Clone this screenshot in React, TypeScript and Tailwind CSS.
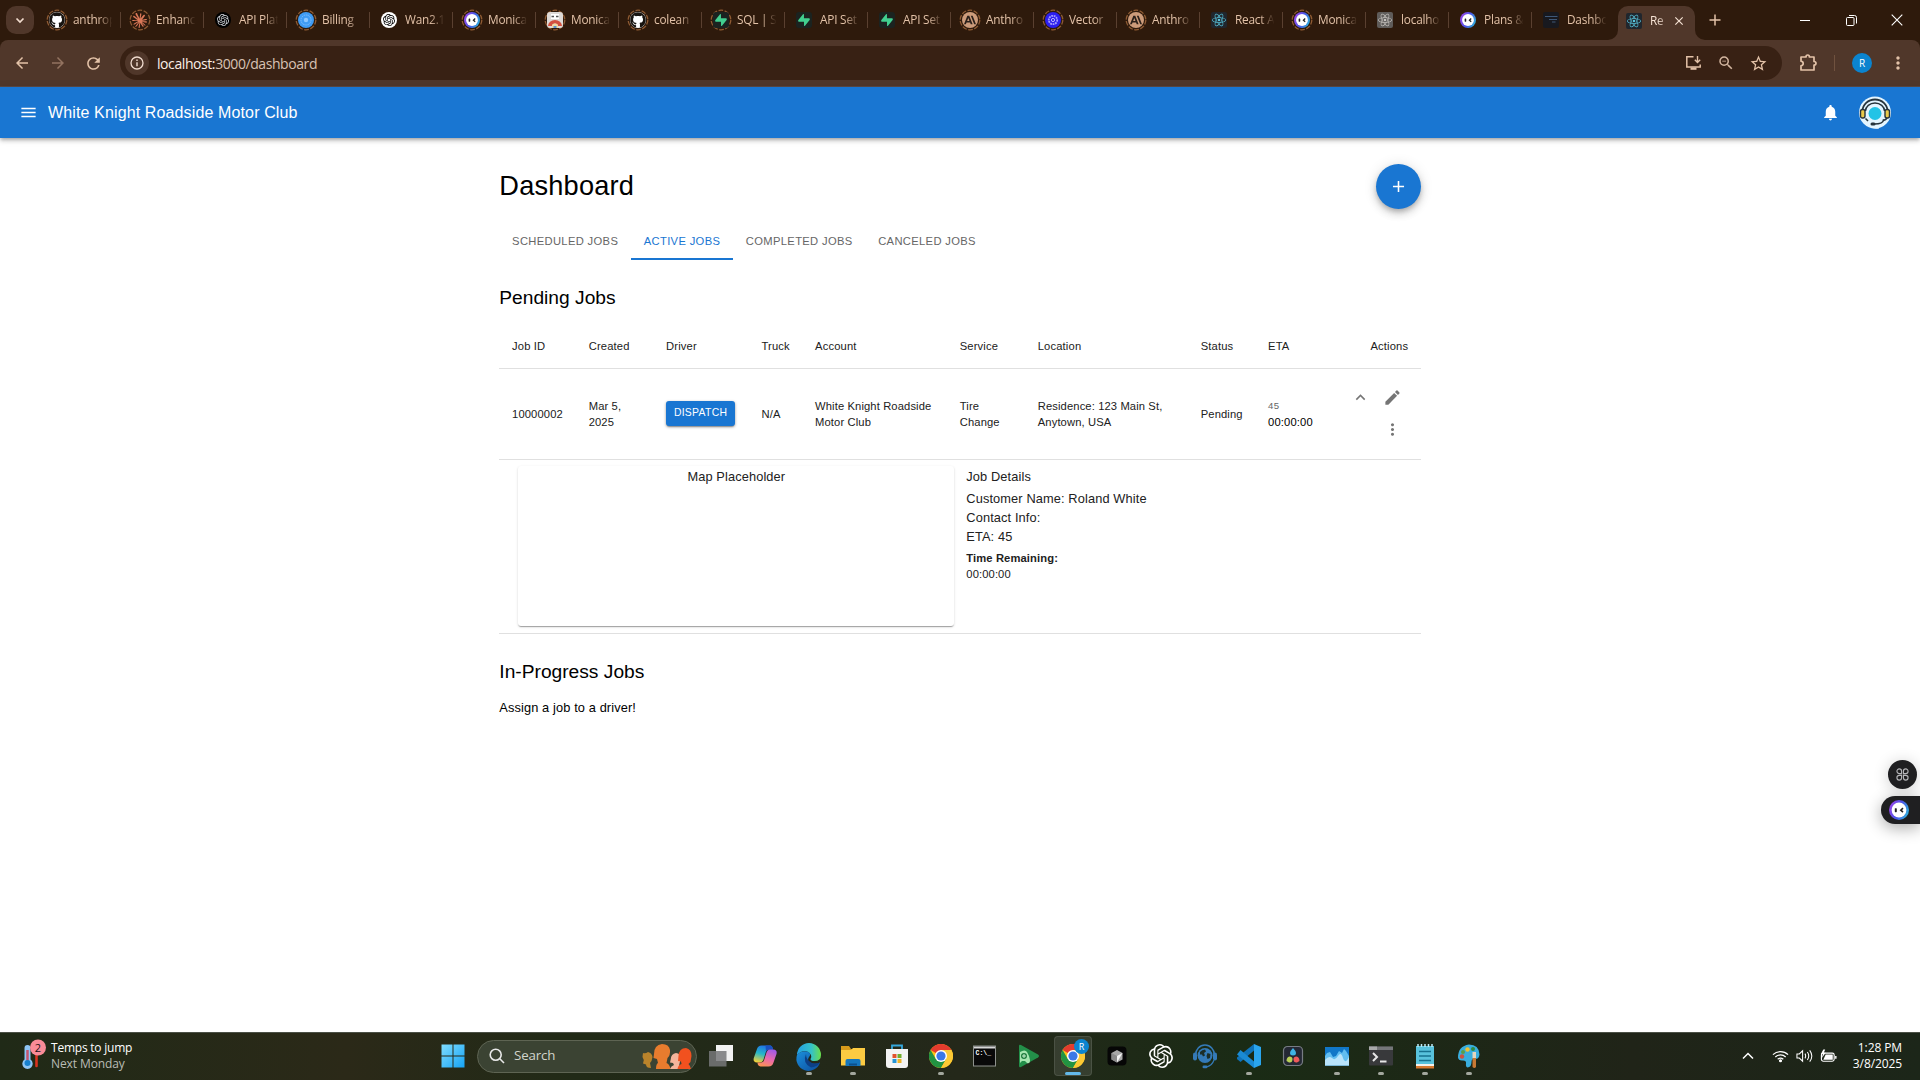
import React from "react";
import { MdMenu, MdNotifications, MdEdit, MdMoreVert, MdExpandLess, MdAdd, MdArrowBack, MdArrowForward, MdRefresh, MdStarOutline, MdZoomOut, MdClose } from "react-icons/md";
import { FaGithub } from "react-icons/fa";
import { SiOpenai, SiSupabase, SiAnthropic, SiClaude, SiReact } from "react-icons/si";

/* ---------- shared icons ---------- */

type P = { id?: string };

const Monica = ({ id = "m" }: P) => (
  <svg viewBox="0 0 20 20" className="size-full">
    <defs>
      <linearGradient id={id} x1="0" y1="0.3" x2="1" y2="0.7">
        <stop offset="0" stopColor="#9a45e8" />
        <stop offset="0.5" stopColor="#4a55e8" />
        <stop offset="1" stopColor="#2fb4dc" />
      </linearGradient>
    </defs>
    <circle cx="10" cy="10" r="10" fill={`url(#${id})`} />
    <circle cx="10" cy="10" r="7.4" fill="#fff" />
    <rect x="5.8" y="8.2" width="2" height="4" rx="0.6" fill="#222" />
    <path d="M14 8.2 11.8 10.2 14 12.2" fill="none" stroke="#222" strokeWidth="1.6" />
  </svg>
);

const Chrome = () => (
  <svg viewBox="0 0 24 24" className="size-full">
    <circle cx="12" cy="12" r="12" fill="#fbc116" />
    <path d="M12 12 1.6 6A12 12 0 0 1 22.4 6H12Z" fill="#e33b2e" />
    <path d="M1.6 6A12 12 0 0 0 12 24l5.2-9L12 12 6.8 15Z" fill="#229342" />
    <path d="M22.4 6H12v6l5.2 3L12 24A12 12 0 0 0 22.4 6Z" fill="#fcc934" />
    <circle cx="12" cy="12" r="6" fill="#fff" />
    <circle cx="12" cy="12" r="4.6" fill="#3b78e7" />
  </svg>
);

type Kind = "github" | "claude" | "openai" | "billing" | "wan" | "monica" | "doge" | "supabase" | "anthropic" | "vector" | "react" | "local" | "dash";

const Favicon = ({ kind, id }: { kind: Kind; id: string }) => {
  switch (kind) {
    case "github":
      return <span className="flex size-4 items-center justify-center rounded-full bg-white"><FaGithub size={16} color="#181410" /></span>;
    case "claude":
      return <SiClaude size={15} color="#d97757" />;
    case "openai":
      return <span className="flex size-4 items-center justify-center rounded-full bg-black text-gray-300"><SiOpenai size={12} /></span>;
    case "wan":
      return <span className="flex size-4 items-center justify-center rounded-full bg-white text-black"><SiOpenai size={12} /></span>;
    case "billing":
      return (
        <svg viewBox="0 0 16 16" className="size-4">
          <circle cx="8" cy="8" r="8" fill="#3f9bf3" />
          <circle cx="8" cy="8" r="5" fill="none" stroke="#7fbdfb" strokeWidth="1" strokeDasharray="1.5 0.8" />
          <circle cx="8" cy="8" r="2.2" fill="#8cc6ff" />
        </svg>
      );
    case "monica":
      return <span className="size-4"><Monica id={id} /></span>;
    case "doge":
      return (
        <svg viewBox="0 0 16 16" className="size-4">
          <rect width="16" height="16" rx="3" fill="#ddd9d6" />
          <path d="M4 2h8v5H4Z" fill="#fff" />
          <path d="M4.500 4.500h2.500M9 4.500h2.500" stroke="#555" strokeWidth="1.400" />
          <path d="M1 14a7 6 0 0 1 14 0h-4a3 2.500 0 0 0-6 0Z" fill="#d4503f" />
          <path d="M5 14a3 2.500 0 0 1 6 0v2H5Z" fill="#f0d9a0" />
          <path d="M6.500 14h3v2h-3Z" fill="#5b8fd0" />
        </svg>
      );
    case "supabase":
      return <span className="flex size-4 items-center justify-center rounded-[3px] bg-[#1b2320]"><SiSupabase size={12} color="#42cf8f" /></span>;
    case "anthropic":
      return <span className="flex size-4 items-center justify-center rounded-full bg-[#cc9b7a] text-[#2b201a]"><SiAnthropic size={12} /></span>;
    case "vector":
      return (
        <svg viewBox="0 0 16 16" className="size-4">
          <circle cx="8" cy="8" r="8" fill="#2c1ff0" />
          <circle cx="8" cy="8" r="4.200" fill="none" stroke="#a39cff" strokeWidth="1.800" strokeDasharray="1.800 0.700" />
          <circle cx="8" cy="8" r="1.600" fill="none" stroke="#b9b4ff" />
        </svg>
      );
    case "react":
      return <span className="flex size-4 items-center justify-center rounded-[2px] bg-[#20262d]"><SiReact size={14} color="#58c4dc" /></span>;
    case "local":
      return <span className="flex size-4 items-center justify-center rounded-[2px] bg-[#5f5c5a]"><SiReact size={14} color="#c6c2be" /></span>;
    case "dash":
      return (
        <svg viewBox="0 0 16 16" className="size-4">
          <rect width="16" height="16" rx="2" fill="#18191f" />
          <path d="M2 4.500h12.500M6 7.500h8M9 10h3.500" stroke="#3f5878" strokeWidth="1.200" />
        </svg>
      );
  }
};

/* ---------- browser chrome ---------- */

const TABS: { kind: Kind; title: string; ring?: boolean }[] = [
  { kind: "github", title: "anthrop", ring: true },
  { kind: "claude", title: "Enhanc", ring: true },
  { kind: "openai", title: "API Plat" },
  { kind: "billing", title: "Billing", ring: true },
  { kind: "wan", title: "Wan2.1" },
  { kind: "monica", title: "Monica", ring: true },
  { kind: "doge", title: "Monica", ring: true },
  { kind: "github", title: "colean", ring: true },
  { kind: "supabase", title: "SQL | S", ring: true },
  { kind: "supabase", title: "API Set" },
  { kind: "supabase", title: "API Set" },
  { kind: "anthropic", title: "Anthro", ring: true },
  { kind: "vector", title: "Vector", ring: true },
  { kind: "anthropic", title: "Anthro", ring: true },
  { kind: "react", title: "React A" },
  { kind: "monica", title: "Monica", ring: true },
  { kind: "local", title: "localho" },
  { kind: "monica", title: "Plans &" },
  { kind: "dash", title: "Dashbo" },
];

const TabStrip = () => (
  <div className="flex h-10 items-center bg-[#2e1a0c] text-[12px] text-[#e3c2a8]">
    <button className="ml-[6px] flex h-7 w-7 items-center justify-center rounded-[10px] bg-[#50372a]">
      <svg viewBox="0 0 10 10" className="size-[10px]"><path d="M1.500 3.500 5 7l3.500-3.500" fill="none" stroke="#f2ddcf" strokeWidth="1.700" /></svg>
    </button>
    <div className="ml-1 flex">
      {TABS.map((t, i) => (
        <div key={i} className="flex h-10 w-[83px] items-center">
          <div className="ml-[6.500px] grid size-6 shrink-0 place-items-center">
            {t.ring && (
              <svg viewBox="0 0 24 24" className="col-start-1 row-start-1 size-6">
                <circle cx="12" cy="12" r="9.800" fill="none" stroke="#8f5b33" strokeWidth="1.300" strokeDasharray="4.700 1.500" />
              </svg>
            )}
            <span className="col-start-1 row-start-1 flex"><Favicon kind={t.kind} id={`tab${i}`} /></span>
          </div>
          <span className="ml-[4.500px] w-[43px] shrink-0 whitespace-nowrap text-[11.800px] tracking-[-0.200px] [mask-image:linear-gradient(to_right,black_58%,transparent_92%)]">{t.title}</span>
          {i < 18 && <span className="ml-auto h-4 w-px shrink-0 bg-[#5a4030]" />}
        </div>
      ))}
    </div>
    <svg viewBox="0 0 10 34" className="-ml-[7px] h-[34px] w-[10px] self-end"><path d="M10 24v10H0A10 10 0 0 0 10 24Z" fill="#50372a" /></svg>
    <div className="flex h-[34px] w-[77px] items-center self-end rounded-t-[10px] bg-[#50372a] pb-1 text-[#f6e3d5]">
      <span className="ml-2"><Favicon kind="react" id="active" /></span>
      <span className="ml-2 w-[14px] whitespace-nowrap text-[11.800px] tracking-[-0.200px] [mask-image:linear-gradient(to_right,black_50%,#0008)]">Re</span>
      <MdClose size={14} className="ml-2" />
    </div>
    <svg viewBox="0 0 10 34" className="h-[34px] w-[10px] self-end"><path d="M0 24v10h10A10 10 0 0 1 0 24Z" fill="#50372a" /></svg>
    <svg viewBox="0 0 12 12" className="ml-[4px] size-3"><path d="M6 .5v11M.5 6h11" stroke="#e3c2a8" strokeWidth="1.500" /></svg>
    <div className="ml-auto mr-[17px] flex items-center text-white">
      <svg viewBox="0 0 10 10" className="mr-9 size-[10px]"><path d="M0 5.500h10" stroke="#fff" /></svg>
      <svg viewBox="0 0 11 11" className="mr-[34px] size-[11px]"><path d="M.5 3.500a1 1 0 0 1 1-1h5.500a1 1 0 0 1 1 1v6a1 1 0 0 1-1 1h-5.500a1 1 0 0 1-1-1ZM3 .5h5.500a2 2 0 0 1 2 2v6" fill="none" stroke="#fff" /></svg>
      <svg viewBox="0 0 12 12" className="size-3"><path d="m.7.7 10.600 10.600M11.300.7.7 11.300" stroke="#fff" strokeWidth="1.100" /></svg>
    </div>
  </div>
);

const Toolbar = () => (
  <div className="bg-[#2e1a0c]">
    <div className="flex h-[47px] items-center rounded-t-[8px] border-b border-[#5c4a45] bg-[#50372a] text-[#e3c2a8]">
      <MdArrowBack size={18} className="ml-[13px]" />
      <MdArrowForward size={18} className="ml-[18px] text-[#937360]" />
      <MdRefresh size={19} className="ml-[17px]" />
      <div className="ml-[17px] flex h-[34px] w-[1662px] items-center rounded-full bg-[#382114]">
        <span className="ml-[5px] flex size-6 items-center justify-center rounded-full bg-[#50372a]">
          <svg viewBox="0 0 14 14" className="size-[14px]"><circle cx="7" cy="7" r="6" fill="none" stroke="#f0dccf" strokeWidth="1.300" /><path d="M7 6.300v4M7 3.600v1.400" stroke="#f0dccf" strokeWidth="1.400" /></svg>
        </span>
        <span className="ml-2 text-[14px] tracking-[-0.420px] text-[#d8c2b3]"><span className="text-[#fbeee5]">localhost:</span>3000/dashboard</span>
        <div className="ml-auto mr-[14px] flex items-center text-[#e3c2a8]">
          <svg viewBox="0 0 17 16" className="mr-[15px] h-4 w-[17px]"><path d="M8.500 1.800H1.800V12h13.400V9.500" fill="none" stroke="currentColor" strokeWidth="1.500" /><path d="M5.500 12.500h6v2.300h-6Z" fill="currentColor" /><path d="M12.500 1v6M9.800 4.800l2.700 2.700 2.700-2.700" fill="none" stroke="currentColor" strokeWidth="1.400" /></svg>
          <MdZoomOut size={18} className="mr-[14px] text-[#d3b6a0]" />
          <MdStarOutline size={19} />
        </div>
      </div>
      <svg viewBox="0 0 18 18" className="ml-[17px] size-[18px] overflow-visible"><path d="M2 3h5q0-2 1.700-2T10.400 3H15v4.500q2 0 2 1.700T15 11v5H2v-4.200q2.200-.4 2.200-2.300T2 7.200Z" fill="none" stroke="currentColor" strokeWidth="1.700" strokeLinejoin="round" /></svg>
      <span className="ml-[17px] h-4 w-px bg-[#70523f]" />
      <span className="ml-[17px] flex size-5 items-center justify-center rounded-full bg-[#0b84cf] text-[10px] text-white">R</span>
      <MdMoreVert size={20} className="ml-[16px]" />
    </div>
  </div>
);

/* ---------- application ---------- */

const Headset = () => (
  <svg viewBox="0 0 32 32" className="size-8 overflow-visible">
    <circle cx="16" cy="15.500" r="16" fill="#e4f5ff" />
    <path d="M8 26h12v5.500q-5 1-9-1.500Z" fill="#e4f5ff" />
    <path d="M3.500 14a12.500 11.500 0 0 1 25 0" fill="none" stroke="#27343c" strokeWidth="1.800" />
    <path d="M6.500 14a9.500 8 0 0 1 19 0" fill="none" stroke="#27343c" strokeWidth="1.400" />
    <circle cx="16" cy="16.500" r="6.500" fill="#22c3e6" />
    <rect x="1.500" y="12.500" width="4.500" height="8.500" rx="2" fill="#e9c94a" stroke="#27343c" strokeWidth="1.400" />
    <rect x="26" y="12.500" width="4.500" height="8.500" rx="2" fill="#e9c94a" stroke="#27343c" strokeWidth="1.400" />
    <path d="M6.500 21.500 9 24M28 21q-1.500 2.500-3.500 2-.5 4-9 4" fill="none" stroke="#27343c" strokeWidth="1.600" />
    <rect x="11.500" y="25.500" width="5" height="3" rx="1.500" fill="#27343c" />
  </svg>
);

const COLS = "grid grid-cols-[76.600px_77.400px_95.400px_53.600px_144.700px_78px_163px_67.300px_70px_95.800px]";
const HEAD = ["Job ID", "Created", "Driver", "Truck", "Account", "Service", "Location", "Status", "ETA"];

const App = () => (
  <div className="flex h-[1080px] w-[1920px] flex-col overflow-hidden bg-white font-['Open_Sans','Noto_Sans',sans-serif]">
    <TabStrip />
    <Toolbar />
    <header className="z-10 flex h-[51px] shrink-0 items-center bg-[#1976d2] font-['Liberation_Sans',Arial,sans-serif] text-white shadow-[0_2px_3px_-1px_#0003,0_3px_4px_#00000024,0_1px_8px_#0000001f]">
      <MdMenu size={19} className="ml-[19px]" />
      <h1 className="ml-[10px] text-[16px] tracking-[0.130px]">White Knight Roadside Motor Club</h1>
      <MdNotifications size={19} className="ml-auto" />
      <span className="ml-[19px] mr-[29px]"><Headset /></span>
    </header>

    <div className="flex min-h-0 flex-1 font-['Liberation_Sans',Arial,sans-serif]">
      <main className="ml-[499.300px] w-[921.800px] text-[11.200px] text-[#212121]">
        <div className="mt-[26px] flex h-[45px] items-center justify-between">
          <h2 className="pb-[2px] text-[27.200px] leading-[34px] tracking-[0.200px] text-black">Dashboard</h2>
          <button className="flex size-[45px] items-center justify-center rounded-full bg-[#1976d2] text-white shadow-[0_3px_5px_-1px_#0003,0_5px_8px_#00000024,0_1px_14px_#0000001f]">
            <MdAdd size={19} />
          </button>
        </div>
        <nav className="mt-[13px] flex h-[38px] text-[11.200px] tracking-[0.340px] text-[#666]">
          <span className="flex items-center px-[12.800px]">SCHEDULED JOBS</span>
          <span className="flex items-center border-b-2 border-[#1976d2] px-[12.800px] pt-[2px] text-[#1976d2]">ACTIVE JOBS</span>
          <span className="flex items-center px-[12.800px]">COMPLETED JOBS</span>
          <span className="flex items-center px-[12.800px]">CANCELED JOBS</span>
        </nav>
        <h3 className="mt-[25px] text-[19.200px] leading-[26px] text-black">Pending Jobs</h3>
        <div className={`${COLS} mt-[11px] h-[47px] items-center border-b border-[#e0e0e0] pt-[2px] tracking-[0.150px]`}>
          {HEAD.map((h) => <span key={h} className="px-[12.800px]">{h}</span>)}
          <span className="px-[12.800px] text-right">Actions</span>
        </div>
        <div className={`${COLS} h-[91px] items-center border-b border-[#e0e0e0] pb-[1px] leading-[16px] tracking-[0.120px]`}>
          <span className="px-[12.800px]">10000002</span>
          <span className="px-[12.800px]">Mar 5,<br />2025</span>
          <span className="px-[12.800px]">
            <button className="flex h-[25px] w-[69px] items-center justify-center rounded-[3px] bg-[#1976d2] pb-[1px] text-[10.400px] tracking-[0.300px] text-white shadow-[0_2px_1px_-1px_#0003,0_1px_3px_#0006]">DISPATCH</button>
          </span>
          <span className="px-[12.800px]">N/A</span>
          <span className="whitespace-nowrap px-[12.800px]">White Knight Roadside<br />Motor Club</span>
          <span className="px-[12.800px]">Tire<br />Change</span>
          <span className="whitespace-nowrap px-[12.800px]">Residence: 123 Main St,<br />Anytown, USA</span>
          <span className="px-[12.800px]">Pending</span>
          <span className="px-[12.800px]"><span className="text-[9.600px] tracking-[0.320px] text-[#666]">45</span><br /><span className="tracking-[0.160px] text-black">00:00:00</span></span>
          <span className="grid grid-cols-2 justify-items-center pl-[20px] pr-[13px] text-[#757575]">
            <span className="flex size-8 items-center justify-center"><MdExpandLess size={19} /></span>
            <span className="flex size-8 items-center justify-center"><MdEdit size={19} /></span>
            <span className="col-start-2 flex size-8 items-center justify-center"><MdMoreVert size={19} /></span>
          </span>
        </div>
        <div className="flex h-[174px] border-b border-[#e0e0e0] pl-[19px] pt-[6px] text-[12.800px] leading-[19px] tracking-[0.120px]">
          <div className="h-[160px] w-[436px] rounded-[3px] bg-white pt-[1px] text-center shadow-[0_2px_1px_-1px_#0003,0_1px_1px_#00000024,0_1px_3px_#0000001f]">Map Placeholder</div>
          <div className="ml-[12px] pt-[1px]">
            <p>Job Details</p>
            <p className="mt-[3px]">Customer Name: Roland White</p>
            <p>Contact Info:</p>
            <p>ETA: 45</p>
            <p className="mt-[4px] text-[11.200px] font-bold leading-4">Time Remaining:</p>
            <p className="text-[11.200px] leading-4">00:00:00</p>
          </div>
        </div>
        <h3 className="mt-[25px] text-[19.200px] leading-[26px] text-black">In-Progress Jobs</h3>
        <p className="mt-[13px] text-[12.800px] leading-[19px] tracking-[0.120px] text-black">Assign a job to a driver!</p>
      </main>
      <aside className="ml-auto flex flex-col items-end pt-[622px]">
        <span className="mr-[3px] flex size-[29px] items-center justify-center rounded-full bg-[#1f1f21] shadow-[0_2px_16px_#0003]">
          <svg viewBox="0 0 14 14" className="size-[13px]" fill="none" stroke="#b5b5b8" strokeWidth="1.200">
            <path d="M6 6H3.500A2.500 2.500 0 1 1 6 3.500ZM8 6h2.500A2.500 2.500 0 1 0 8 3.500ZM6 8H3.500A2.500 2.500 0 1 0 6 10.500ZM8 8h2.500A2.500 2.500 0 1 1 8 10.500Z" />
          </svg>
        </span>
        <span className="mt-[7px] flex h-7 w-[39px] items-center rounded-l-full bg-[#1f1f21] pl-[8px] shadow-[0_4px_16px_#0005]">
          <span className="size-5"><Monica id="side" /></span>
        </span>
      </aside>
    </div>
    <Taskbar />
  </div>
);

/* ---------- taskbar ---------- */

const TaskItem = ({ children, dot, active }: { children: React.ReactNode; dot?: boolean; active?: boolean }) => (
  <span className="grid h-[47px] w-[44px] place-items-center">
    <span className={`col-start-1 row-start-1 mb-[1px] grid h-10 w-[38px] place-items-center rounded-[4px] ${active ? "border border-white/10 bg-white/10" : ""}`}>
      <span className="flex size-6 items-center justify-center">{children}</span>
    </span>
    {dot && <span className="col-start-1 row-start-1 mb-[5px] h-[3px] w-[6px] self-end rounded-full bg-[#a3a79e]" />}
    {active && <span className="col-start-1 row-start-1 mb-[5px] h-[3px] w-4 self-end rounded-full bg-[#63b9e9]" />}
  </span>
);

const S = ({ children }: { children: React.ReactNode }) => <svg viewBox="0 0 24 24" className="size-6 overflow-visible">{children}</svg>;

const Taskbar = () => (
  <footer className="flex h-12 shrink-0 items-center border-t border-[#4b5046] bg-[linear-gradient(90deg,#202a17,#2b2918_18%,#212a17_30%,#24281a_50%,#1a2b15_65%,#202418_85%,#1c2619)] text-[12px] text-white">
    <div className="flex h-full w-[200px] items-center pl-[20px]">
      <svg viewBox="0 0 28 34" className="-mt-[3px] h-[34px] w-7">
        <path d="M16.500 17v11" stroke="#d8331f" strokeWidth="2.600" strokeLinecap="round" />
        <path d="M4.500 10a3 3 0 0 1 6 0v11.500a5.200 5.200 0 1 1-6 0Z" fill="#8ec5f5" />
        <path d="M7.500 12v13" stroke="#c5536e" strokeWidth="2.500" />
        <circle cx="7.500" cy="25" r="3" fill="#1680ce" />
        <circle cx="18" cy="9.500" r="8" fill="#f98b97" />
        <text x="18" y="13.500" textAnchor="middle" fontSize="11" fill="#251014">2</text>
      </svg>
      <div className="-mt-[2px] ml-[3px] leading-4 tracking-[-0.220px]"><p>Temps to jump</p><p className="tracking-[-0.100px] text-[#b9bcb5]">Next Monday</p></div>
    </div>
    <div className="ml-[230.500px] flex items-center">
      <TaskItem>
        <S>
          <defs><linearGradient id="win" x1="0" y1="0" x2="1" y2="1" gradientUnits="objectBoundingBox"><stop stopColor="#7fdcff" /><stop offset="1" stopColor="#15a3f5" /></linearGradient></defs>
          <path d="M.5.5h11v11H.5ZM12.500.5h11v11h-11ZM.5 12.500h11v11H.5ZM12.500 12.500h11v11h-11Z" fill="url(#win)" />
        </S>
      </TaskItem>
      <div className="mb-[1px] ml-[2.500px] mr-[2px] flex h-[33px] w-[220px] items-center rounded-full border border-[#5e6453] bg-[#3b4333]">
        <svg viewBox="0 0 16 16" className="ml-[11px] size-4" fill="none" stroke="#e8e8e8" strokeWidth="1.600"><circle cx="6.700" cy="6.700" r="5.500" /><path d="m10.800 10.800 4.200 4.200" /></svg>
        <span className="ml-[9px] text-[13.300px] tracking-[-0.150px] text-[#d1d4cc]">Search</span>
        <svg viewBox="0 0 50 26" className="ml-auto mr-[4px] h-[26px] w-[50px]">
          <path d="M1 10q2.500.8 5-1 4 1 4.500 5-.5 4-2.500 6l1 5q-5 0-5-3.500l-3-1 .8-3.500L.5 14Z" fill="#b9832b" />
          <path d="M20 1q7 0 8 6 .5 5-2.500 8l-1 5q3 1 4 6H14q0-5 2-6l-1-4-3.500-1L12 11q0-9 8-10Z" fill="#e87c2e" />
          <path d="M34 10q4.500 0 4.500 6l-1.500 7 1.500 3H28q1-3 4-4l-1-2-3-.5.8-3.500q.2-5 5.200-6Z" fill="#f4b49b" />
          <path d="M44 5q5.500 1 5.500 8l-1 6-2 2q2 2 2.500 5H35.500q.5-4 4-5l-.5-2.500-3-.5.5-5q.5-8 7.500-8Z" fill="#f1511f" />
        </svg>
      </div>
      <TaskItem><S><rect x="7" y="1" width="17" height="16" fill="#f2f2f2" /><rect x="0" y="7" width="17.500" height="15.500" fill="#77787a" fillOpacity="0.850" /></S></TaskItem>
      <TaskItem>
        <S>
          <defs>
            <linearGradient id="cpl" x1="0.6" y1="0" x2="0.3" y2="1"><stop stopColor="#1f6fe6" /><stop offset="0.500" stopColor="#25b7c9" /><stop offset="1" stopColor="#f2d13a" /></linearGradient>
            <linearGradient id="cpr" x1="0.7" y1="0" x2="0.3" y2="1"><stop stopColor="#a259e6" /><stop offset="0.550" stopColor="#ee6aa8" /><stop offset="1" stopColor="#fb9254" /></linearGradient>
          </defs>
          <path d="M8.500 1.500h9q2 .5 2.500 4h-4q-2.500 0-3.300 3l-2.200 7q-1 3-4 3H3.800q-4-.5-3-4.500L4 5q1-3.500 4.500-3.500Z" fill="url(#cpl)" />
          <path d="M12.500 1.500h5q2 .5 2.500 4h-4q-2 0-3 2Z" fill="#1a50c0" />
          <path d="M15.500 22.500h-8q-3-.5-3-4h3.500q2.500 0 3.300-3l2.200-7q1-3 3.500-3h3.500q4 .5 3 4.500L20.500 18.500q-1 4-5 4Z" fill="url(#cpr)" />
        </S>
      </TaskItem>
      <TaskItem dot>
        <S>
          <defs>
            <linearGradient id="eg" x1="0" x2="1"><stop stopColor="#239fe2" /><stop offset="0.600" stopColor="#35c1c8" /><stop offset="1" stopColor="#6adf4a" /></linearGradient>
            <linearGradient id="eb" x1="0" y1="0" x2="1" y2="1"><stop stopColor="#1b8fdc" /><stop offset="1" stopColor="#0c4d9c" /></linearGradient>
          </defs>
          <path d="M0 11A12 12 0 0 1 24 11q0 6-6.500 6-4 0-4-2 2-3-1-6Q7 4 0 11Z" fill="url(#eg)" />
          <path d="M0 11Q4 6 10 7.500q4 1.500 3 4-5 6 2 8 4 1 8-1A12 12 0 0 1 0 11Z" fill="url(#eb)" />
          <path d="M9 10q-4 9 5 13.500 6-.5 9-5-5 2-9 0-5-3-5-8.500Z" fill="#0d3f86" />
        </S>
      </TaskItem>
      <TaskItem dot>
        <S><path d="M0 2h8l2 3h10v3H0Z" fill="#d79a1b" /><path d="M0 6h10l2-2h12v17.500H0Z" fill="#fccb42" /><path d="M4.500 17q0-2 2-2h11q2 0 2 2v5h-15Z" fill="#1476bd" /><path d="M8 19.500h8v2H8Z" fill="#0c518d" /></S>
      </TaskItem>
      <TaskItem>
        <S><path d="M7 6V1.500h10V6" fill="none" stroke="#36a8dd" strokeWidth="1.800" /><path d="M1 5h22v16q0 3-3 3H4q-3 0-3-3Z" fill="#f3f3f3" /><path d="M7.500 10h4v4h-4Z" fill="#e2512c" /><path d="M12.500 10h4v4h-4Z" fill="#71ad2d" /><path d="M7.500 15h4v4h-4Z" fill="#2494d5" /><path d="M12.500 15h4v4h-4Z" fill="#efb325" /></S>
      </TaskItem>
      <TaskItem dot><Chrome /></TaskItem>
      <TaskItem>
        <S><rect x="0.500" y="2" width="22" height="20" fill="#090909" stroke="#8e918d" strokeWidth="1" /><path d="M1 3.500h21" stroke="#d7d7d7" strokeWidth="2" /><text x="2.500" y="11" fontSize="6.500" fontFamily="Liberation Mono" fontWeight="bold" fill="#fff">C:\_</text></S>
      </TaskItem>
      <TaskItem>
        <S><path d="M2 2q0-2 2-1l17 9.500q2 1.500 0 3L4 23q-2 1-2-1Z" fill="#238f49" /><path d="M3 8q5-3 7 0 2 3 3 8 0 4-3 3l-2-2H5l-2 2Z" fill="#a6e6b0" /><circle cx="7" cy="12" r="3" fill="#217c3f" /><path d="M7 10v4M5 12h4" stroke="#c9f4cf" /></S>
      </TaskItem>
      <TaskItem active>
        <span className="relative size-6"><Chrome /><span className="absolute -right-[4px] -top-[5px] flex size-[15px] items-center justify-center rounded-full bg-[#0b84cf] text-[9px]">R</span></span>
      </TaskItem>
      <TaskItem>
        <S><rect x="2.500" y="2.500" width="19" height="19" rx="4" fill="#060606" /><path d="m12 6 5.500 3v6.500L12 18.500l-5.500-3V9Z" fill="#a8a8a8" /><path d="m6.500 9 5.500 3 5.500-3L12 18.500V12Z" fill="#f4f4f4" /><path d="m6.500 9 5.500 3v6.500l-5.500-3Z" fill="#8a8a8a" /></S>
      </TaskItem>
      <TaskItem><SiOpenai size={24} /></TaskItem>
      <TaskItem>
        <S><circle cx="12" cy="11.500" r="7.500" fill="#347ab8" /><path d="M7 8q2-2.500 5-2.500l1 2-2 1.500 1 2.500-2 1-1-2-2 0ZM14.500 9l3 1-.5 4-2.500 1-1-3Z" fill="#1b2d29" /><path d="M2.500 11a9.500 10 0 0 1 19 0" fill="none" stroke="#347ab8" strokeWidth="1.600" /><rect x="0" y="8.500" width="4" height="8" rx="2" fill="#347ab8" /><rect x="20" y="8.500" width="4" height="8" rx="2" fill="#347ab8" /><path d="M21 16q-2 6-8 7" fill="none" stroke="#347ab8" strokeWidth="1.200" /><rect x="9.500" y="21.500" width="5" height="2.800" rx="1.400" fill="#347ab8" /></S>
      </TaskItem>
      <TaskItem dot>
        <S>
          <path d="M17 0 24 3v18l-7 3Z" fill="#2aa5ee" />
          <path d="M17 0v6.500L3.500 18 .5 15.500 0 15v-1.500Z" fill="#0f72b8" />
          <path d="M0 10.500 3.500 6 17 17.500V24L0 10.500Z" fill="#1a8ad4" />
        </S>
      </TaskItem>
      <TaskItem>
        <S><rect x="2.500" y="2.500" width="19" height="19" rx="4" fill="#242834" stroke="#777c83" strokeWidth="1.200" /><path d="M12 4q3 3 3 5 0 2.500-3 2.500T9 9q0-2 3-5Z" fill="#3fb3e4" /><path d="M5.500 17q0-4 3-4.500 3 0 3 2.500 0 4-3.500 3.500Z" fill="#b7cf57" /><path d="M18.500 17q0-4-3-4.500-3 0-3 2.500 0 4 3.500 3.500Z" fill="#ef5a5a" /></S>
      </TaskItem>
      <TaskItem dot>
        <S><path d="M0 3h24v18.500H0Z" fill="#1177c8" /><path d="M0 12l2-3 3-1 3 5 3-1 3-5 3 2 2-4 2 2 3 5v9.500H0Z" fill="#61bdf0" /><path d="M0 16q4-5 7-2t6-2 5 2 6-1v8.500H0Z" fill="#b8e3fb" /></S>
      </TaskItem>
      <TaskItem dot>
        <S><rect x="0" y="2.500" width="24" height="19" rx="1" fill="#38393b" /><path d="M0 2.500h24v3.500H0Z" fill="#747679" /><path d="M0 2.500h8v3.500H0Z" fill="#a8a9aa" /><path d="m4 9 4 4-4 4M11 17.500h6.500" fill="none" stroke="#e6e6e6" strokeWidth="2" /></S>
      </TaskItem>
      <TaskItem dot>
        <S><path d="M3 2h18v20H3Z" fill="#58c2dc" /><path d="M3 21h18v3.500H3Z" fill="#d9792f" /><path d="M3 20h18v2H3Z" fill="#f4f1eb" /><path d="M6 7.500h12M6 12h12M6 16.500h12" stroke="#16718f" strokeWidth="1.600" /><path d="M5 0v3M8.500 0v3M12 0v3M15.500 0v3M19 0v3" stroke="#bdeaf5" strokeWidth="1.500" /></S>
      </TaskItem>
      <TaskItem dot>
        <S><path d="M12 .5q10 0 10.500 10-.5 5-5 4.500-3-.5-3 3 0 5-4 5.500-2-.5-1.500-4 .5-3-3-3-4.500.5-5-3Q1 2 12 .5Z" fill="#39aede" /><circle cx="10.500" cy="5.500" r="2.200" fill="#efc234" /><circle cx="16" cy="5" r="2" fill="#318b42" /><circle cx="6" cy="8" r="2" fill="#5a9f48" /><circle cx="5" cy="12.500" r="2.200" fill="#ca5340" /><path d="M15.500 8H19v6h-3.500Z" fill="#e4d5bd" /><path d="M15.500 14H19v9q-1.500 2-3.500 0Z" fill="#c77935" /></S>
      </TaskItem>
    </div>
    <div className="mb-[1px] ml-auto mr-[18px] flex items-center">
      <svg viewBox="0 0 12 8" className="mr-[18px] h-2 w-3"><path d="m1 6.500 5-5 5 5" fill="none" stroke="#fff" strokeWidth="1.500" /></svg>
      <svg viewBox="0 0 18 14" className="mr-[7px] h-[14px] w-[17px]" fill="none" stroke="#fff" strokeWidth="1.300"><path d="M1 5.500a11.500 11.500 0 0 1 16 0M3.500 8a8 8 0 0 1 11 0M6 10.500a4.500 4.500 0 0 1 6 0" /><circle cx="9" cy="12" r="1" fill="#fff" /></svg>
      <svg viewBox="0 0 18 14" className="mr-[7px] h-[14px] w-[17px]" fill="none" stroke="#fff" strokeWidth="1.100"><path d="M1 4.800h2.500L7 1.500v11L3.500 9.200H1ZM9.500 4.500q1.500 2.500 0 5M12 2.800q3 4.200 0 8.400M14.500 1q4.500 6 0 12" /></svg>
      <svg viewBox="0 0 18 14" className="mr-[16px] h-[14px] w-[17px]"><rect x="1.500" y="4" width="13.500" height="8.500" rx="2" fill="none" stroke="#fff" strokeWidth="1.200" /><path d="M6 5.500h7.500V11H3.500ZM16 7h1.500v3H16ZM3.500 0 1 5h2L2 9l4-5.500H4L5.500 0Z" fill="#fff" /></svg>
      <div className="text-right leading-4 tracking-[-0.100px]"><p>1:28 PM</p><p>3/8/2025</p></div>
    </div>
  </footer>
);

export default App;
